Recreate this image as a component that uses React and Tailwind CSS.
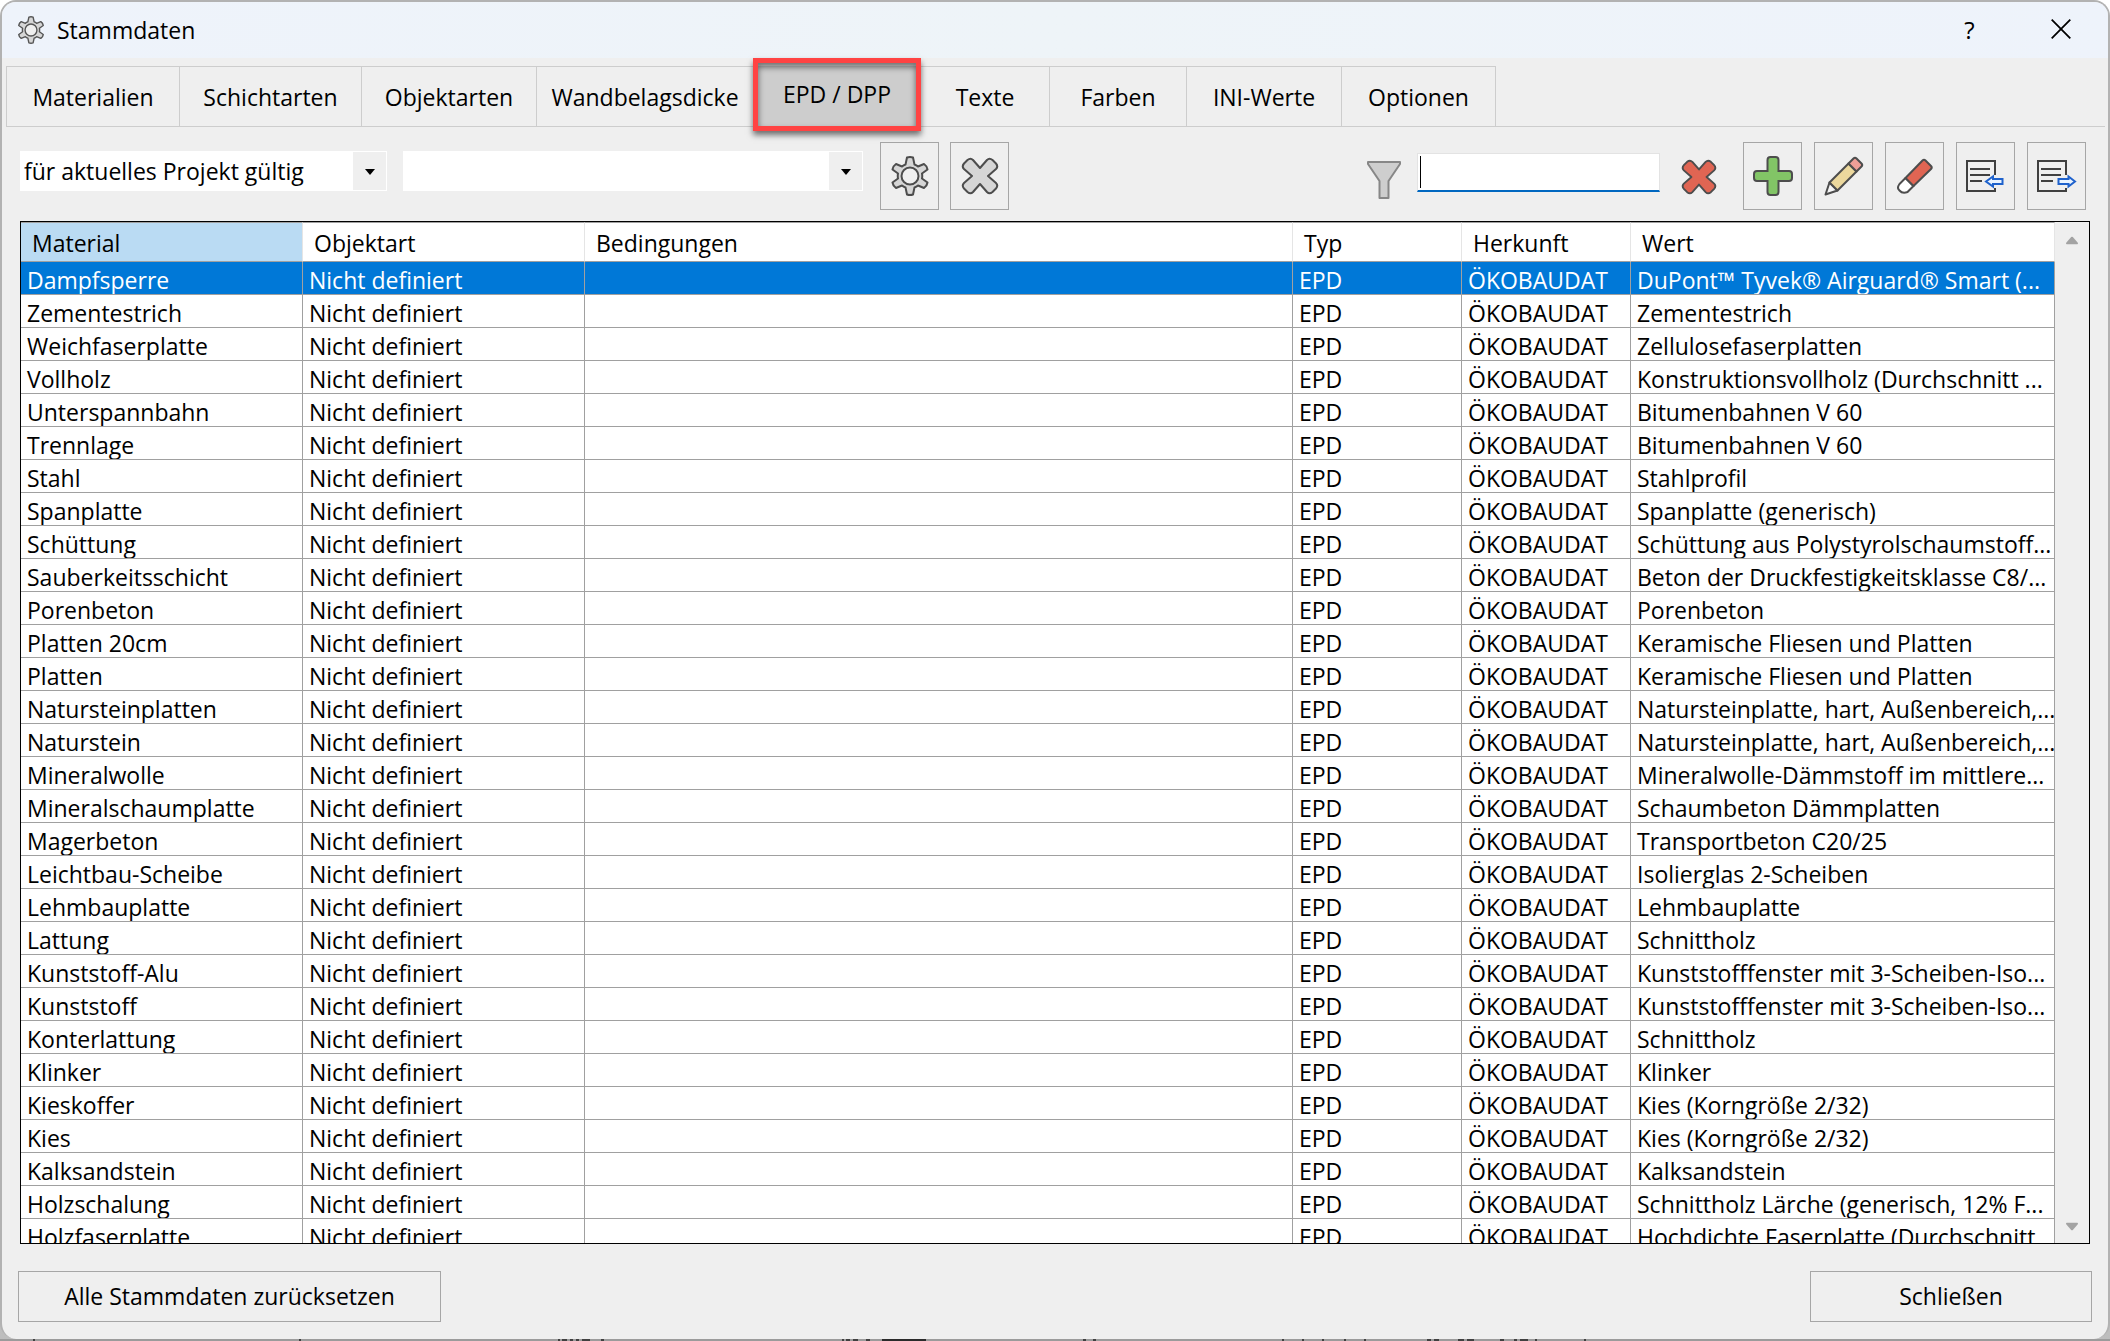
const TABS = [
  { label: 'Materialien', width: 'w-[174px]' },
  { label: 'Schichtarten', width: 'w-[182px]' },
  { label: 'Objektarten', width: 'w-[175px]' },
  { label: 'Wandbelagsdicke', width: 'w-[217px]' },
  { label: 'EPD / DPP', width: 'w-[167px]', active: true },
  { label: 'Texte', width: 'w-[129px]' },
  { label: 'Farben', width: 'w-[137px]' },
  { label: 'INI-Werte', width: 'w-[155px]' },
  { label: 'Optionen', width: 'w-[154px]' }
]

const ROWS = [
  ['Dampfsperre', 'DuPont™ Tyvek® Airguard® Smart (...'],
  ['Zementestrich', 'Zementestrich'],
  ['Weichfaserplatte', 'Zellulosefaserplatten'],
  ['Vollholz', 'Konstruktionsvollholz (Durchschnitt ...'],
  ['Unterspannbahn', 'Bitumenbahnen V 60'],
  ['Trennlage', 'Bitumenbahnen V 60'],
  ['Stahl', 'Stahlprofil'],
  ['Spanplatte', 'Spanplatte (generisch)'],
  ['Schüttung', 'Schüttung aus Polystyrolschaumstoff...'],
  ['Sauberkeitsschicht', 'Beton der Druckfestigkeitsklasse C8/...'],
  ['Porenbeton', 'Porenbeton'],
  ['Platten 20cm', 'Keramische Fliesen und Platten'],
  ['Platten', 'Keramische Fliesen und Platten'],
  ['Natursteinplatten', 'Natursteinplatte, hart, Außenbereich,...'],
  ['Naturstein', 'Natursteinplatte, hart, Außenbereich,...'],
  ['Mineralwolle', 'Mineralwolle-Dämmstoff im mittlere...'],
  ['Mineralschaumplatte', 'Schaumbeton Dämmplatten'],
  ['Magerbeton', 'Transportbeton C20/25'],
  ['Leichtbau-Scheibe', 'Isolierglas 2-Scheiben'],
  ['Lehmbauplatte', 'Lehmbauplatte'],
  ['Lattung', 'Schnittholz'],
  ['Kunststoff-Alu', 'Kunststofffenster mit 3-Scheiben-Iso...'],
  ['Kunststoff', 'Kunststofffenster mit 3-Scheiben-Iso...'],
  ['Konterlattung', 'Schnittholz'],
  ['Klinker', 'Klinker'],
  ['Kieskoffer', 'Kies (Korngröße 2/32)'],
  ['Kies', 'Kies (Korngröße 2/32)'],
  ['Kalksandstein', 'Kalksandstein'],
  ['Holzschalung', 'Schnittholz Lärche (generisch, 12% F...'],
  ['Holzfaserplatte', 'Hochdichte Faserplatte (Durchschnitt ...']
]

const HEADERS = ['Material', 'Objektart', 'Bedingungen', 'Typ', 'Herkunft', 'Wert']

export default function App() {
  return (
    <div className="relative h-screen overflow-hidden bg-linear-to-b from-white to-[#bdbdbd] pb-[2px] font-['Open_Sans','Noto_Sans',sans-serif] text-[23px] text-black">
      <Backdrop />
      <div className="relative flex h-full flex-col overflow-hidden rounded-2xl border-2 border-b-0 border-[#b2b2b2] bg-[#efefef]">
        <TitleBar />
        <TabBar />
        <Toolbar />
        <DataTable />
        <footer className="flex justify-between px-4 pt-[27px] pb-[17px]">
          <button className="h-[51px] w-[423px] border border-[#a6a6a6]">Alle Stammdaten zurücksetzen</button>
          <button className="h-[51px] w-[282px] border border-[#a6a6a6]">Schließen</button>
        </footer>
      </div>
    </div>
  )
}

function TitleBar() {
  return (
    <header className="flex h-14 shrink-0 items-center bg-linear-to-r from-[#eef3fb] via-[#eef4f8] to-[#eef3fb] pr-0.5 pl-[15px]">
      <GearIcon size={28} stroke="#555" />
      <h1 className="ml-3 flex-1">Stammdaten</h1>
      <button aria-label="Hilfe" className="w-[91px] text-2xl font-medium">?</button>
      <button aria-label="Fenster schließen" className="flex w-[91px] justify-center pb-0.5">
        <svg width="20" height="20" viewBox="0 0 20 20" stroke="#000" strokeWidth="1.8">
          <path d="M.7.7 19.3 19.3M19.3.7.7 19.3" />
        </svg>
      </button>
    </header>
  )
}

function TabBar() {
  return (
    <nav className="mt-2 mr-[3px] ml-1 flex h-[61px] shrink-0 border-b border-[#cdcdcd]">
      {TABS.map(tab => (
        <button
          key={tab.label}
          className={`relative shrink-0 border-t border-r border-[#cdcdcd] pt-0.5 first:border-l ${tab.width} ${tab.active ? 'bg-[#cdcdcd]' : ''}`}
        >
          {tab.active ? <span className="block pb-1.5">{tab.label}</span> : tab.label}
          {tab.active && (
            <span className="absolute -inset-x-px -top-[9px] -bottom-[5px] z-10 border-[5px] border-[#ff4343] shadow-[0_4px_6px_rgba(0,0,0,0.55),inset_0_4px_6px_rgba(0,0,0,0.55)]" />
          )}
        </button>
      ))}
    </nav>
  )
}

function Toolbar() {
  return (
    <div className="flex h-[94px] shrink-0 items-start pt-[15px] pr-[22px] pl-[18px]">
      <div className="mt-[9px] flex gap-4">
        <Dropdown label="Gültigkeit" value="für aktuelles Projekt gültig" width="w-[367px]" />
        <Dropdown label="Auswahl" value="" width="w-[460px]" />
      </div>
      <div className="ml-[17px] flex gap-[11px]">
        <ToolButton label="Einstellungen"><GearIcon size={40} stroke="#4d4d4d" /></ToolButton>
        <ToolButton label="Auswahl löschen"><CrossIcon size={38} fill="#d6d6d6" /></ToolButton>
      </div>
      <div className="ml-auto flex items-start">
        <svg className="mt-[19px]" width="34" height="38" viewBox="0 0 34 38" fill="#cecece" stroke="#878787" strokeWidth="2" strokeLinejoin="round">
          <path d="M1 1h32v2L21.500 20v17h-9V20L1 3z" />
        </svg>
        <div className="relative mt-[11px] ml-4 flex">
          <input
            type="text"
            aria-label="Filter"
            className="h-[39px] w-[243px] border border-b-2 border-[#e3e3e3] border-b-[#0067c0] bg-white px-[3px] outline-none"
          />
          <span className="absolute top-[3px] left-[3px] h-8 w-px bg-black" />
        </div>
        <button aria-label="Filter löschen" className="mt-[17px] ml-[21px]">
          <CrossIcon size={36} fill="#e06553" />
        </button>
      </div>
      <div className="ml-[26px] flex gap-3">
        <ToolButton label="Neu">
          <svg width="40" height="40" viewBox="0 0 40 40" fill="#82c566" stroke="#4d4d4d" strokeWidth="2">
            <path d="M17.500 1h5q3 0 3 3v11H36q3 0 3 3v4q0 3-3 3H25.500v11q0 3-3 3h-5q-3 0-3-3V25H4q-3 0-3-3v-4q0-3 3-3h10.500V4q0-3 3-3z" />
          </svg>
        </ToolButton>
        <ToolButton label="Bearbeiten">
          <svg width="40" height="40" viewBox="0 0 40 40" stroke="#4d4d4d" strokeWidth="2" strokeLinejoin="round">
            <path d="M5.500 26.500 1.500 38.500 13.500 34.500z" fill="#f5f5f5" />
            <path d="M24.500 7.500 32.500 15.500 13.500 34.500 5.500 26.500z" fill="#ecd89d" />
            <path d="M24.500 7.500 29.500 2.500q1.500-1.500 3 0l5 5q1.500 1.500 0 3l-5 5z" fill="#ef9f97" />
          </svg>
        </ToolButton>
        <ToolButton label="Löschen">
          <svg width="36" height="36" viewBox="0 0 36 36" stroke="#4d4d4d" strokeWidth="2" strokeLinejoin="round">
            <path d="M8.500 20 2.500 26q-3 4 0 6.500 3 3.500 8 1.500l6-6z" fill="#fff" />
            <path d="M8.500 20 25.500 2.500q1.500-1.500 3 0l5.500 5.500q1.500 1.500 0 3L16.500 28z" fill="#e06553" />
          </svg>
        </ToolButton>
        <ToolButton label="Importieren"><ListIcon arrow="M20 21.500 27 16.500v2.500h9.500v5H27v2.500z" /></ToolButton>
        <ToolButton label="Exportieren"><ListIcon arrow="M38 21.500 31.500 16.500v2.500H21.500v5h10v2.500z" /></ToolButton>
      </div>
    </div>
  )
}

function Dropdown({ label, value, width }) {
  return (
    <div className={`relative h-10 bg-white ${width}`}>
      <select aria-label={label} defaultValue={value} className="h-10 w-full appearance-none bg-transparent pl-1 outline-none">
        <option value={value}>{value}</option>
      </select>
      <span className="pointer-events-none absolute inset-y-px right-px flex w-[33px] items-center justify-center bg-[#efefef] pt-0.5">
        <svg width="10" height="6" viewBox="0 0 10 6"><path d="M0 0h10L5 6z" /></svg>
      </span>
    </div>
  )
}

function ToolButton({ label, children }) {
  return (
    <button aria-label={label} className="flex h-[68px] w-[59px] items-center justify-center border border-[#a6a6a6]">
      {children}
    </button>
  )
}

function DataTable() {
  return (
    <main className="mx-[18px] flex min-h-0 flex-1 border border-black">
      <div className="flex-1 overflow-hidden bg-white">
        <table className="w-full table-fixed border-separate border-spacing-0">
          <colgroup>
            <col className="w-[282px]" />
            <col className="w-[282px]" />
            <col />
            <col className="w-[169px]" />
            <col className="w-[169px]" />
            <col className="w-[424px]" />
          </colgroup>
          <thead>
            <tr>
              {HEADERS.map(h => (
                <th key={h} className="h-10 border-t border-r border-b border-t-[#a0a0a0] border-r-[#e5e5e5] border-b-[#a0a0a0] p-0 pt-0.5 pl-[11px] text-left leading-8 font-normal first:bg-[#badbf3]">
                  {h}
                </th>
              ))}
            </tr>
          </thead>
          <tbody>
            {ROWS.map(([material, wert], i) => (
              <tr key={material} className={i === 0 ? 'bg-[#0078d7] text-white' : ''}>
                <Cell>{material}</Cell>
                <Cell>Nicht definiert</Cell>
                <Cell />
                <Cell>EPD</Cell>
                <Cell>ÖKOBAUDAT</Cell>
                <Cell>{wert}</Cell>
              </tr>
            ))}
          </tbody>
        </table>
      </div>
      <div className="flex w-[34px] flex-col items-center justify-between pt-[14px] pb-3">
        <svg width="12" height="9" viewBox="0 0 14 9" fill="#a3a3a3"><path d="M6 .5q1-1 2 0l6 7q0 1.500-1 1.500H1q-1 0-1-1.500z" /></svg>
        <svg width="12" height="9" viewBox="0 0 14 9" fill="#a3a3a3"><path d="M6 8.500q1 1 2 0l6-7Q14 0 13 0H1Q0 0 0 1.500z" /></svg>
      </div>
    </main>
  )
}

function Cell({ children }) {
  return (
    <td className="border-r border-b border-[#a0a0a0] p-0">
      <div className="h-8 overflow-hidden pl-1.5 leading-9 whitespace-nowrap">{children}</div>
    </td>
  )
}

function GearIcon({ size, stroke }) {
  return (
    <svg width={size} height={size} viewBox="0 0 40 40" fill="#d6d6d6" stroke={stroke} strokeWidth="2" strokeLinejoin="round">
      <path d="M17 1.500q3-1 6 0l1.500 7q2 .6 3.500 2l6-2.500q3 2 3.500 5.500L32 17.500q.5 2.500 0 5l5.500 4q-.5 3.500-3.500 5.500L28 29.500q-1.500 1.400-3.500 2l-1.500 7q-3 1-6 0l-1.500-7q-2-.6-3.500-2L6 32Q3 30 2.500 26.500L8 22.500q-.5-2.500 0-5L2.500 13.500Q3 10 6 8l6 2.500q1.500-1.400 3.500-2z" />
      <circle cx="20" cy="20" r="8.500" fill="#efefef" />
    </svg>
  )
}

function CrossIcon({ size, fill }) {
  return (
    <svg width={size} height={size} viewBox="0 0 38 38" fill={fill} stroke="#4d4d4d" strokeWidth="2" strokeLinejoin="round">
      <path d="M3 6.500 6.500 3q3-2.500 5.500 0l7 8 7-8q2.500-2.500 5.500 0L35 6.500q2.500 3 0 5.500l-8 7 8 7q2.500 2.500 0 5.500L31.500 35q-3 2.500-5.500 0l-7-8-7 8q-2.500 2.500-5.500 0L3 31.500Q.5 28.500 3 26l8-7-8-7Q.5 9.500 3 6.500z" />
    </svg>
  )
}

function ListIcon({ arrow }) {
  return (
    <svg width="40" height="32" viewBox="0 0 40 32" fill="none" stroke="#404040" strokeWidth="2">
      <path d="M29 15V1H1v30h28v-3M4 9h20M4 15h20M4 21h12" />
      <path d={arrow} fill="#eaf4ff" stroke="#1f62cc" />
    </svg>
  )
}

// sliver of the document window that shows below the dialog
function Backdrop() {
  return (
    <svg className="absolute inset-x-0 bottom-0" width="100%" height="2">
      <rect width="100%" height="2" fill="#9b9b9b" />
      <path d="M33 1h2M299 1h2M558 1h2M562 1h5M570 1h3M576 1h3M582 1h8M601 1h3M842 1h2M846 1h4M853 1h5M866 1h4M1083 1h3M1093 1h3M1282 1h2M1302 1h2M1322 1h2M1344 1h2M1364 1h2M1427 1h4M1434 1h5M1458 1h6M1467 1h7M1500 1h4M1514 1h3M1520 1h8M1535 1h2M1584 1h2" stroke="#404040" strokeWidth="2" />
      <path d="M882 1h44" stroke="#2b2b2b" strokeWidth="2" />
    </svg>
  )
}
